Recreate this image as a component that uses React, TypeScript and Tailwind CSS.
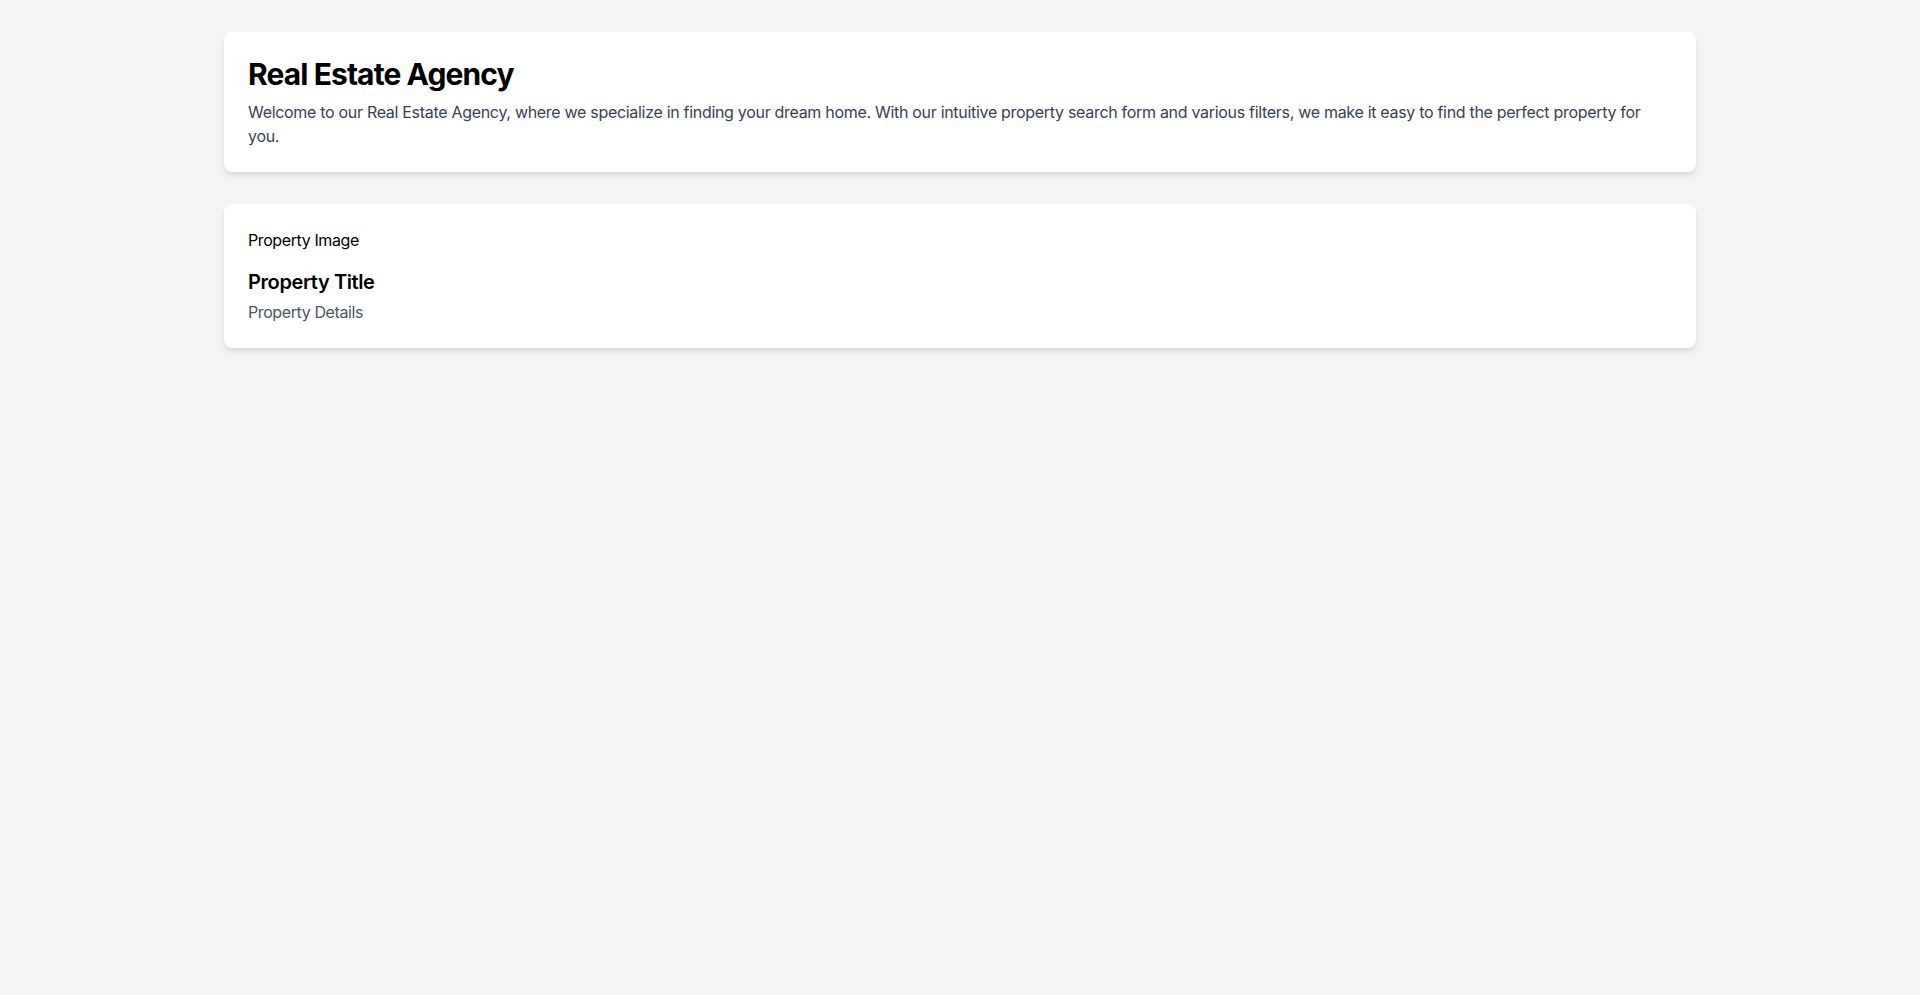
export default function App() {
  return (
    <div className="min-h-screen bg-gray-100 font-['Inter',sans-serif] tracking-[-0.025em] text-black">
      <div className="container mx-auto px-8 py-8">
        <header className="mb-8 rounded-lg bg-white p-6 shadow-md">
          <h1 className="mb-2 text-3xl font-bold tracking-[-0.03em]">Real Estate Agency</h1>
          <p className="tracking-[-0.019em] text-gray-700">
            Welcome to our Real Estate Agency, where we specialize in finding your dream home. With our intuitive
            property search form and various filters, we make it easy to find the perfect property for you.
          </p>
        </header>

        <section className="rounded-lg bg-white p-6 shadow-md">
          <div className="mb-4">Property Image</div>
          <h2 className="mb-1 text-xl font-semibold">Property Title</h2>
          <p className="text-gray-600">Property Details</p>
        </section>
      </div>
    </div>
  );
}
